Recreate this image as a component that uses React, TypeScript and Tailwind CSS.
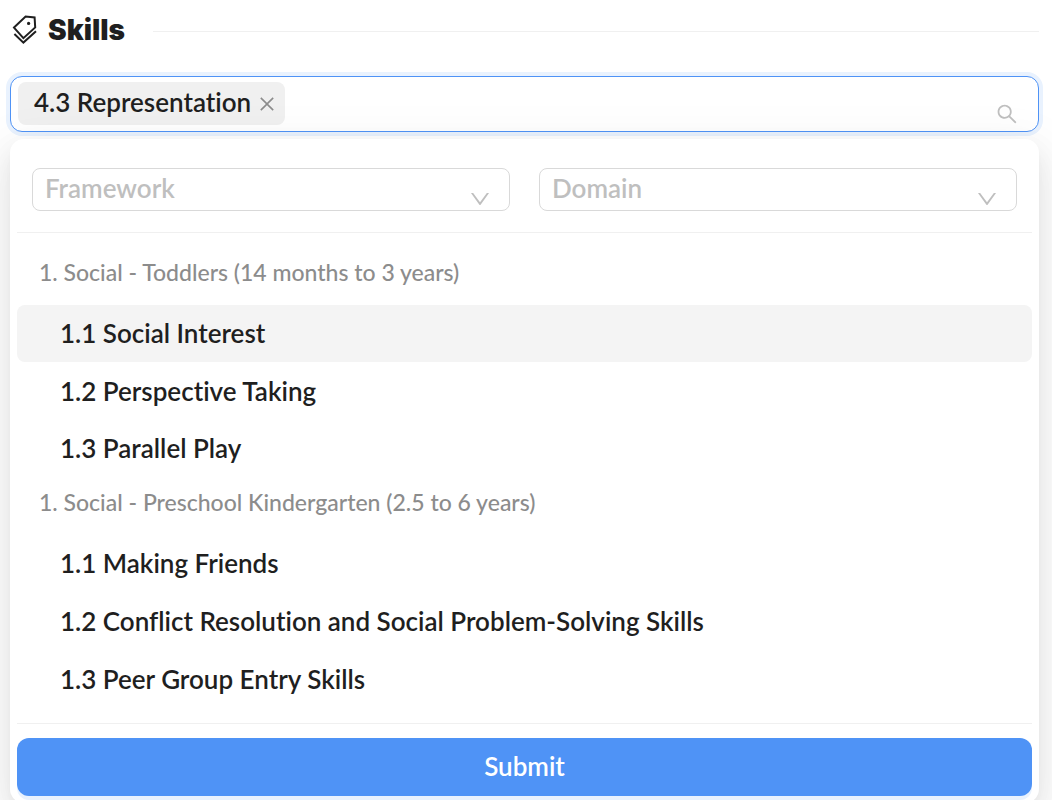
import { useState } from "react";
import { AiOutlineClose, AiOutlineDown, AiOutlineSearch } from "react-icons/ai";

interface SkillGroup {
  title: string;
  skills: string[];
}

const groups: SkillGroup[] = [
  {
    title: "1. Social - Toddlers (14 months to 3 years)",
    skills: ["1.1 Social Interest", "1.2 Perspective Taking", "1.3 Parallel Play"],
  },
  {
    title: "1. Social - Preschool Kindergarten (2.5 to 6 years)",
    skills: [
      "1.1 Making Friends",
      "1.2 Conflict Resolution and Social Problem-Solving Skills",
      "1.3 Peer Group Entry Skills",
    ],
  },
];

function TagsIcon() {
  return (
    <svg className="h-[30px] w-[26px]" viewBox="0 0 26 30" fill="none" stroke="currentColor" strokeWidth="2" aria-hidden="true">
      <path d="M2 12.6 13.6 1.6 22.6 2.4 23.2 12.4 11.4 23.2Z" />
      <path strokeWidth="2" d="M2.4 19 11.4 27.6 24 16.2" />
      <circle cx="16.6" cy="8.4" r="1.6" fill="currentColor" stroke="none" />
    </svg>
  );
}

function FilterSelect({ label }: { label: string }) {
  return (
    <div className="relative flex-1">
      <select
        aria-label={label}
        className="h-[43px] w-full appearance-none rounded-lg border border-[#d9d9d9] bg-white px-3 pb-1 text-[26px] leading-9 text-[#bfbfbf] outline-none"
      >
        <option>{label}</option>
      </select>
      <AiOutlineDown className="pointer-events-none absolute right-[18px] bottom-0 h-6 w-6 text-[#bfbfbf]" />
    </div>
  );
}

export default function App() {
  const [selected, setSelected] = useState(["4.3 Representation"]);
  const [active, setActive] = useState("1.1 Social Interest");

  return (
    <div className="h-screen overflow-hidden bg-white pr-[13px] pl-[10px] font-['Lato',sans-serif] font-semibold text-[#1f1f1f] [font-variant-ligatures:none]">
      <header className="flex h-[62px] items-center">
        <div className="flex items-center gap-2.5 pb-0.5 pl-0.5">
          <TagsIcon />
          <h1 className="font-['Inter',sans-serif] text-[28px] leading-9 font-black">Skills</h1>
        </div>
        <div className="ml-7 h-px flex-1 bg-[#f0f0f0]" />
      </header>

      <div className="relative mt-3.5">
        <div className="flex h-14 rounded-xl border border-[#4f93f6] bg-white p-[7px] pt-[5px] ring-4 ring-[#e9f2fe]">
          {selected.map((skill) => (
            <span key={skill} className="flex h-[43px] items-center gap-1.5 rounded-lg bg-[#f0f0f0] pr-2 pl-4 text-[26px]">
              <span className="pb-0.5">{skill}</span>
              <button type="button" aria-label={`Remove ${skill}`} onClick={() => setSelected([])}>
                <AiOutlineClose className="h-5 w-5 text-[#8c8c8c]" />
              </button>
            </span>
          ))}
          <input aria-label="Search skills" className="min-w-0 flex-1 bg-transparent px-2 text-[26px] outline-none" />
          <AiOutlineSearch className="mr-3 -mb-0.5 h-6 w-6 self-end text-[#bfbfbf]" />
        </div>

        <div className="absolute top-[63px] right-0 left-0 rounded-[14px] bg-white p-[7px] shadow-[0_11px_29px_0_rgba(0,0,0,0.08),0_5px_11px_-7px_rgba(0,0,0,0.12),0_16px_50px_14px_rgba(0,0,0,0.05)]">
          <div className="flex gap-[29px] border-b border-[#f0f0f0] px-[15px] pt-[22px] pb-[21px]">
            <FilterSelect label="Framework" />
            <FilterSelect label="Domain" />
          </div>

          <div role="listbox" aria-label="Skills" className="mt-3.5 flex h-[461px] flex-col">
            {groups.map((group) => (
              <div key={group.title} role="group" aria-label={group.title} className="grid flex-1 grid-rows-4">
                <div className="flex items-center px-[22px] pb-2 text-[23px] font-medium text-[#8c8c8c]">{group.title}</div>
                {group.skills.map((skill) => (
                  <button
                    key={skill}
                    type="button"
                    role="option"
                    aria-selected={skill === active}
                    onMouseEnter={() => setActive(skill)}
                    className="flex items-center rounded-lg px-[43px] text-left text-[26px] aria-selected:bg-[#f4f4f4]"
                  >
                    {skill}
                  </button>
                ))}
              </div>
            ))}
          </div>

          <div className="mt-[15px] border-t border-[#f0f0f0] pt-3.5">
            <button type="button" className="h-[58px] w-full rounded-xl bg-[#4f93f6] pb-0.5 text-[26px] text-white shadow-[0_4px_0_#e9f2fe]">
              Submit
            </button>
          </div>
        </div>
      </div>
    </div>
  );
}
